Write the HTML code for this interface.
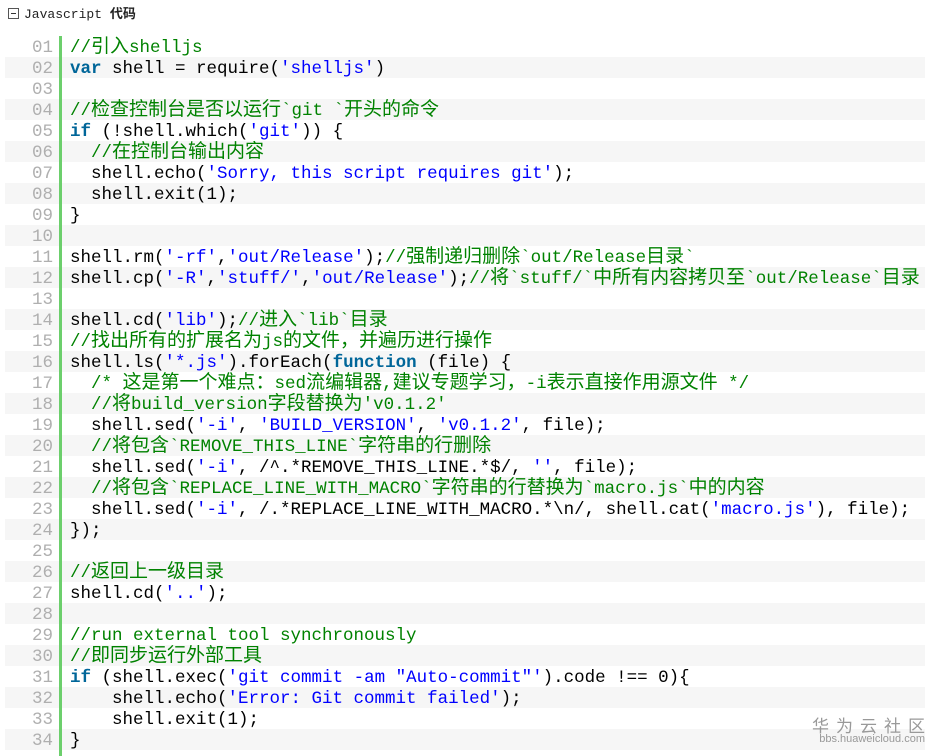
<!DOCTYPE html>
<html><head><meta charset="utf-8"><style>
body{margin:0;width:939px;height:756px;background:#fff;overflow:hidden;position:relative;font-family:"Liberation Mono","Noto Sans CJK SC",monospace;}
.hd{position:absolute;left:8px;top:3px;font-size:13px;color:#222;font-family:"Liberation Mono","Noto Sans CJK SC",monospace;}
.hd b{font-family:"Noto Sans CJK SC",sans-serif;}
.box{display:inline-block;width:9px;height:9px;border:1px solid #555;vertical-align:-1px;margin-right:5px;position:relative}
.box:after{content:"";position:absolute;left:2px;top:4px;width:5px;height:1px;background:#333}
.bar{position:absolute;left:59px;top:36px;width:3px;height:720px;background:#6ccf6c}
.r{position:absolute;left:5px;width:920px;height:21px;line-height:25px;font-size:17.5px;white-space:pre;color:#000;overflow:visible}
.r.e{background:#f6f6f6}
.n{position:absolute;left:20px;width:28px;color:#afafaf;text-align:right}
.c{position:absolute;left:65px}
i{font-style:normal;font-size:19px;font-family:"Noto Sans CJK SC",sans-serif;line-height:0}
.cm{color:#008200}.k{color:#006699;font-weight:bold}.s{color:#0000ff}
.wm{position:absolute;right:14px;top:712px;color:#999;text-align:right}
.wm1{font-family:"Noto Sans CJK SC",sans-serif;font-size:17px;letter-spacing:7px;margin-right:-7px}
.wm2{font-family:"Liberation Sans",sans-serif;font-size:11px;margin-top:-4px}
</style></head><body>
<div class="hd"><span class="box"></span>Javascript <b>代码</b></div>
<div class="r" style="top:36px"><span class="n">01</span><span class="c"><span class="cm">//<i>引入</i>shelljs</span></span></div>
<div class="r e" style="top:57px"><span class="n">02</span><span class="c"><span class="k">var</span> shell = require(<span class="s">'shelljs'</span>)</span></div>
<div class="r" style="top:78px"><span class="n">03</span></div>
<div class="r e" style="top:99px"><span class="n">04</span><span class="c"><span class="cm">//<i>检查控制台是否以运行</i>`git `<i>开头的命令</i></span></span></div>
<div class="r" style="top:120px"><span class="n">05</span><span class="c"><span class="k">if</span> (!shell.which(<span class="s">'git'</span>)) {</span></div>
<div class="r e" style="top:141px"><span class="n">06</span><span class="c">  <span class="cm">//<i>在控制台输出内容</i></span></span></div>
<div class="r" style="top:162px"><span class="n">07</span><span class="c">  shell.echo(<span class="s">'Sorry, this script requires git'</span>);</span></div>
<div class="r e" style="top:183px"><span class="n">08</span><span class="c">  shell.exit(1);</span></div>
<div class="r" style="top:204px"><span class="n">09</span><span class="c">}</span></div>
<div class="r e" style="top:225px"><span class="n">10</span></div>
<div class="r" style="top:246px"><span class="n">11</span><span class="c">shell.rm(<span class="s">'-rf'</span>,<span class="s">'out/Release'</span>);<span class="cm">//<i>强制递归删除</i>`out/Release<i>目录</i>`</span></span></div>
<div class="r e" style="top:267px"><span class="n">12</span><span class="c">shell.cp(<span class="s">'-R'</span>,<span class="s">'stuff/'</span>,<span class="s">'out/Release'</span>);<span class="cm">//<i>将</i>`stuff/`<i>中所有内容拷贝至</i>`out/Release`<i>目录</i></span></span></div>
<div class="r" style="top:288px"><span class="n">13</span></div>
<div class="r e" style="top:309px"><span class="n">14</span><span class="c">shell.cd(<span class="s">'lib'</span>);<span class="cm">//<i>进入</i>`lib`<i>目录</i></span></span></div>
<div class="r" style="top:330px"><span class="n">15</span><span class="c"><span class="cm">//<i>找出所有的扩展名为</i>js<i>的文件，并遍历进行操作</i></span></span></div>
<div class="r e" style="top:351px"><span class="n">16</span><span class="c">shell.ls(<span class="s">'*.js'</span>).forEach(<span class="k">function</span> (file) {</span></div>
<div class="r" style="top:372px"><span class="n">17</span><span class="c">  <span class="cm">/* <i>这是第一个难点：</i>sed<i>流编辑器</i>,<i>建议专题学习，</i>-i<i>表示直接作用源文件</i> */</span></span></div>
<div class="r e" style="top:393px"><span class="n">18</span><span class="c">  <span class="cm">//<i>将</i>build_version<i>字段替换为</i>'v0.1.2'</span></span></div>
<div class="r" style="top:414px"><span class="n">19</span><span class="c">  shell.sed(<span class="s">'-i'</span>, <span class="s">'BUILD_VERSION'</span>, <span class="s">'v0.1.2'</span>, file);</span></div>
<div class="r e" style="top:435px"><span class="n">20</span><span class="c">  <span class="cm">//<i>将包含</i>`REMOVE_THIS_LINE`<i>字符串的行删除</i></span></span></div>
<div class="r" style="top:456px"><span class="n">21</span><span class="c">  shell.sed(<span class="s">'-i'</span>, /^.*REMOVE_THIS_LINE.*$/, <span class="s">''</span>, file);</span></div>
<div class="r e" style="top:477px"><span class="n">22</span><span class="c">  <span class="cm">//<i>将包含</i>`REPLACE_LINE_WITH_MACRO`<i>字符串的行替换为</i>`macro.js`<i>中的内容</i></span></span></div>
<div class="r" style="top:498px"><span class="n">23</span><span class="c">  shell.sed(<span class="s">'-i'</span>, /.*REPLACE_LINE_WITH_MACRO.*\n/, shell.cat(<span class="s">'macro.js'</span>), file);</span></div>
<div class="r e" style="top:519px"><span class="n">24</span><span class="c">});</span></div>
<div class="r" style="top:540px"><span class="n">25</span></div>
<div class="r e" style="top:561px"><span class="n">26</span><span class="c"><span class="cm">//<i>返回上一级目录</i></span></span></div>
<div class="r" style="top:582px"><span class="n">27</span><span class="c">shell.cd(<span class="s">'..'</span>);</span></div>
<div class="r e" style="top:603px"><span class="n">28</span></div>
<div class="r" style="top:624px"><span class="n">29</span><span class="c"><span class="cm">//run external tool synchronously</span></span></div>
<div class="r e" style="top:645px"><span class="n">30</span><span class="c"><span class="cm">//<i>即同步运行外部工具</i></span></span></div>
<div class="r" style="top:666px"><span class="n">31</span><span class="c"><span class="k">if</span> (shell.exec(<span class="s">'git commit -am "Auto-commit"'</span>).code !== 0){</span></div>
<div class="r e" style="top:687px"><span class="n">32</span><span class="c">    shell.echo(<span class="s">'Error: Git commit failed'</span>);</span></div>
<div class="r" style="top:708px"><span class="n">33</span><span class="c">    shell.exit(1);</span></div>
<div class="r e" style="top:729px"><span class="n">34</span><span class="c">}</span></div>
<div class="bar"></div>
<div class="wm"><div class="wm1">华为云社区</div><div class="wm2">bbs.huaweicloud.com</div></div>
</body></html>
